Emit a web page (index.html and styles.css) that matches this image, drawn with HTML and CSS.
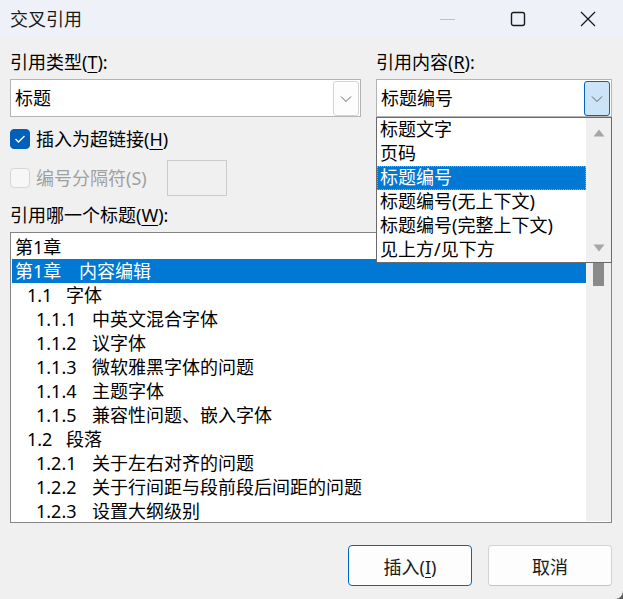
FILE: index.html
```html
<!DOCTYPE html>
<html lang="zh-CN">
<head>
    <meta charset="UTF-8">
    <title>交叉引用</title>
    <link rel="stylesheet" href="styles.css">
</head>
<body>
    <div class="window">
        <div class="titlebar">
            <div class="title">交叉引用</div>
            <div class="caption-buttons">
                <span class="cap-btn cap-min"></span>
                <span class="cap-btn">
                    <svg width="16" height="16" viewBox="0 0 16 16"><rect x="1.5" y="1.5" width="13" height="13" rx="2" fill="none" stroke="#1a1a1a" stroke-width="1.4"/></svg>
                </span>
                <span class="cap-btn">
                    <svg width="16" height="16" viewBox="0 0 16 16"><path d="M1 1 L15 15 M15 1 L1 15" stroke="#1a1a1a" stroke-width="1.3"/></svg>
                </span>
            </div>
        </div>

        <div class="content">
            <div class="top-grid">
                <div class="col">
                    <div class="field-label">引用类型(<u>T</u>):</div>
                    <div class="combo">
                        <span class="combo-value">标题</span>
                        <span class="combo-btn">
                            <svg width="12" height="8" viewBox="0 0 12 8"><polyline points="1,1.5 6,6.5 11,1.5" fill="none" stroke="#606060" stroke-width="1"/></svg>
                        </span>
                    </div>
                    <div class="check-row">
                        <span class="checkbox checked">
                            <svg width="12" height="10" viewBox="0 0 12 10"><polyline points="1.5,5 4.5,8 10.5,2" fill="none" stroke="#fff" stroke-width="1.4"/></svg>
                        </span>
                        <span class="check-label">插入为超链接(<u>H</u>)</span>
                    </div>
                    <div class="check-row disabled">
                        <span class="checkbox"></span>
                        <span class="check-label sep-label">编号分隔符(S)</span>
                        <span class="sep-box"></span>
                    </div>
                </div>

                <div class="col">
                    <div class="field-label">引用内容(<u>R</u>):</div>
                    <div class="combo-wrap">
                        <div class="combo">
                            <span class="combo-value">标题编号</span>
                            <span class="combo-btn active">
                                <svg width="12" height="8" viewBox="0 0 12 8"><polyline points="1,1.5 6,6.5 11,1.5" fill="none" stroke="#606060" stroke-width="1"/></svg>
                            </span>
                        </div>
                        <div class="dropdown">
                            <div class="dropdown-items">
                                <div class="dd-item">标题文字</div>
                                <div class="dd-item">页码</div>
                                <div class="dd-item selected">标题编号</div>
                                <div class="dd-item">标题编号(无上下文)</div>
                                <div class="dd-item">标题编号(完整上下文)</div>
                                <div class="dd-item">见上方/见下方</div>
                            </div>
                            <div class="dd-scroll">
                                <svg width="12" height="8" viewBox="0 0 12 8"><polygon points="6,0.5 11.5,7.5 0.5,7.5" fill="#a6a6a6"/></svg>
                                <svg width="12" height="8" viewBox="0 0 12 8"><polygon points="0.5,0.5 11.5,0.5 6,7.5" fill="#a6a6a6"/></svg>
                            </div>
                        </div>
                    </div>
                </div>
            </div>

            <div class="field-label list-label">引用哪一个标题(<u>W</u>):</div>
            <div class="listbox">
                <div class="list-items">
                    <div class="item lv0"><span class="num">第1章</span></div>
                    <div class="item lv0 selected"><span class="num">第1章</span>内容编辑</div>
                    <div class="item lv1"><span class="num">1.1</span>字体</div>
                    <div class="item lv2"><span class="num">1.1.1</span>中英文混合字体</div>
                    <div class="item lv2"><span class="num">1.1.2</span>议字体</div>
                    <div class="item lv2"><span class="num">1.1.3</span>微软雅黑字体的问题</div>
                    <div class="item lv2"><span class="num">1.1.4</span>主题字体</div>
                    <div class="item lv2"><span class="num">1.1.5</span>兼容性问题、嵌入字体</div>
                    <div class="item lv1"><span class="num">1.2</span>段落</div>
                    <div class="item lv2"><span class="num">1.2.1</span>关于左右对齐的问题</div>
                    <div class="item lv2"><span class="num">1.2.2</span>关于行间距与段前段后间距的问题</div>
                    <div class="item lv2"><span class="num">1.2.3</span>设置大纲级别</div>
                </div>
                <div class="list-scroll">
                    <div class="thumb"></div>
                </div>
            </div>

            <div class="buttons">
                <button class="btn default">插入(<u>I</u>)</button>
                <button class="btn">取消</button>
            </div>
        </div>
    </div>
</body>
</html>
```

FILE: styles.css
```css
* {
    margin: 0;
    padding: 0;
    box-sizing: border-box;
}

body {
    background: #5c5c5c;
    font-family: "Noto Sans", "Noto Sans CJK SC", sans-serif;
    font-size: 18px;
    color: #000;
}

.window {
    width: 623px;
    height: 599px;
    background: #f0f0f0;
    border-bottom-right-radius: 8px;
    overflow: hidden;
}

u {
    text-decoration-thickness: 1px;
    text-underline-offset: 3px;
}

/* title bar */
.titlebar {
    height: 38px;
    background: #eef2f8;
    display: flex;
    align-items: center;
    justify-content: space-between;
}

.title {
    padding-left: 10px;
    font-size: 18px;
    line-height: 24px;
    color: #1a1a1a;
}

.caption-buttons {
    display: flex;
    align-items: center;
    height: 100%;
    padding-right: 27px;
    gap: 54px;
}

.cap-btn {
    width: 16px;
    height: 16px;
    display: flex;
}

.cap-min {
    align-items: center;
}

.cap-min::before {
    content: "";
    width: 15px;
    height: 1px;
    background: #c0c0c0;
}

/* top area */
.content {
    padding: 12px 11px 0 10px;
}

.top-grid {
    display: grid;
    grid-template-columns: 351px 236px;
    column-gap: 15px;
}

.field-label {
    line-height: 24px;
}

.combo {
    margin-top: 5px;
    height: 38px;
    background: #fff;
    border: 1px solid #b4b4b4;
    display: flex;
    align-items: flex-start;
}

.combo-value {
    line-height: 36px;
    padding-left: 4px;
    flex: 1;
}

.combo-btn {
    margin: 1px 1px 0 0;
    width: 26px;
    height: 35px;
    border: 1px solid #d4d4d4;
    border-radius: 3px;
    background: #fdfdfd;
    display: flex;
    align-items: center;
    justify-content: center;
}

.combo-btn.active {
    background: #cce4f7;
    border-color: #0067c0;
}

.check-row {
    margin-top: 10px;
    height: 24px;
    display: flex;
    align-items: center;
    gap: 6px;
}

.check-row.disabled {
    margin-top: 9px;
    height: 36px;
    color: #a0a0a0;
}

.checkbox {
    width: 20px;
    height: 20px;
    border-radius: 4px;
    border: 1px solid #d6d6d6;
    background: #f7f7f7;
    display: flex;
    align-items: center;
    justify-content: center;
}

.checkbox.checked {
    background: #005fb8;
    border-color: #005fb8;
}

.check-label {
    line-height: 24px;
}

.sep-label {
    width: 125px;
}

.sep-box {
    width: 60px;
    height: 36px;
    border: 1px solid #cccccc;
    background: #f0f0f0;
}

/* dropdown popup */
.combo-wrap {
    position: relative;
}

.dropdown {
    position: absolute;
    top: 100%;
    left: 0;
    width: 236px;
    height: 146px;
    background: #fff;
    border: 1px solid #6a6a6a;
    display: flex;
    z-index: 2;
}

.dropdown-items {
    flex: 1;
}

.dd-item {
    height: 24px;
    line-height: 23px;
    padding-left: 3px;
    white-space: nowrap;
}

.dd-item.selected {
    background: #0078d4;
    color: #fff;
    border: 1px dotted #e8953a;
    padding-left: 2px;
    line-height: 21px;
}

.dd-scroll {
    width: 25px;
    background: #f0f0f0;
    display: flex;
    flex-direction: column;
    align-items: center;
    justify-content: space-between;
    padding: 11px 0 10px;
}

/* heading list */
.list-label {
    margin-top: 7px;
}

.listbox {
    margin-top: 5px;
    width: 602px;
    height: 291px;
    background: #fff;
    border: 1px solid #848484;
    display: flex;
}

.list-items {
    flex: 1;
    padding-top: 2px;
    overflow: hidden;
}

.item {
    height: 24px;
    line-height: 24px;
    margin-left: 1px;
    white-space: nowrap;
}

.item.selected {
    background: #0078d4;
    color: #fff;
}

.num {
    display: inline-block;
}

.lv0 .num {
    padding-left: 3px;
    width: 67px;
}

.lv1 .num {
    padding-left: 15px;
    width: 54px;
}

.lv2 .num {
    padding-left: 24px;
    width: 80px;
}

.list-scroll {
    width: 25px;
    background: #f0f0f0;
    margin-bottom: 1px;
    padding-left: 7px;
}

.thumb {
    margin-top: 3px;
    width: 11px;
    height: 50px;
    background: #8a8a8a;
}

/* buttons */
.buttons {
    margin-top: 22px;
    display: flex;
    justify-content: flex-end;
    gap: 16px;
}

.btn {
    width: 124px;
    height: 41px;
    font-family: inherit;
    font-size: 18px;
    color: #1a1a1a;
    background: #fdfdfd;
    border: 1px solid #d3d3d3;
    border-bottom-color: #c4c4c4;
    border-radius: 4px;
}

.btn.default {
    border-color: #0067c0;
}
```
